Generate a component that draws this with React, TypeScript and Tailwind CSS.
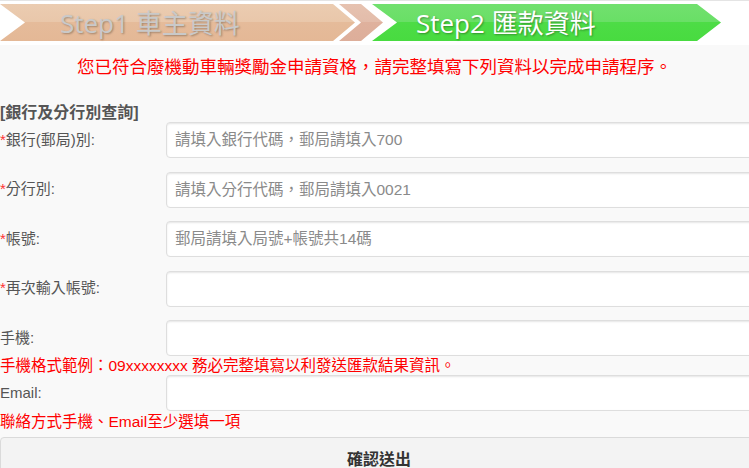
import React from 'react'

const font = { fontFamily: '"Liberation Sans", "Noto Sans CJK TC", sans-serif' }

function Banner() {
  return (
    <div className="relative h-[37px]">
      <svg className="absolute inset-0" width="749" height="37" viewBox="0 0 749 37">
        <defs>
          <linearGradient id="peach" x1="0" y1="0" x2="0" y2="1">
            <stop offset="0" stopColor="#ebccb1" />
            <stop offset="0.5" stopColor="#e9c7aa" />
            <stop offset="0.5" stopColor="#e5bb9a" />
            <stop offset="1" stopColor="#e4b896" />
          </linearGradient>
          <linearGradient id="pink" x1="0" y1="0" x2="0" y2="1">
            <stop offset="0" stopColor="#e6c2b0" />
            <stop offset="0.5" stopColor="#e3bcaa" />
            <stop offset="0.5" stopColor="#dfb19d" />
            <stop offset="1" stopColor="#ddae9a" />
          </linearGradient>
          <linearGradient id="green" x1="0" y1="0" x2="0" y2="1">
            <stop offset="0" stopColor="#71e06e" />
            <stop offset="0.5" stopColor="#69df66" />
            <stop offset="0.5" stopColor="#4ddc46" />
            <stop offset="1" stopColor="#48db40" />
          </linearGradient>
        </defs>
        <polygon points="0,0 333,0 355,18.5 333,37 0,37 25,18.5" fill="url(#peach)" />
        <polygon points="339,0 361,0 383,18.5 361,37 339,37 361,18.5" fill="url(#pink)" />
        <polygon points="372,0 697,0 721,18.5 697,37 372,37 397,18.5" fill="url(#green)" />
      </svg>
      <div
        className="relative flex items-center h-[37px] text-[26px] leading-none"
        style={{ fontFamily: '"Open Sans", "Noto Sans CJK TC", sans-serif' }}
      >
        <span className="w-[416px] pl-[60px] text-[#c9c9c9] [text-shadow:1px_1px_2px_rgba(0,0,0,0.3)]">
          Step1 車主資料
        </span>
        <span className="text-white [text-shadow:1px_1px_2px_rgba(0,0,0,0.35)]">Step2 匯款資料</span>
      </div>
    </div>
  )
}

interface FieldProps {
  label: string
  required?: boolean
  placeholder?: string
}

function Field({ label, required, placeholder }: FieldProps) {
  return (
    <div className="flex items-center h-[36px]">
      <label className="w-[166px] shrink-0 text-[15px] text-[#555]">
        {required && <span className="text-[#ff3333]">*</span>}
        {label}:
      </label>
      <input
        className="flex-1 h-[36px] rounded-[4px] border border-[#dedede] bg-white px-[8px] text-[15.5px] placeholder:text-[#8a8a8a] shadow-[inset_0_1px_2px_rgba(0,0,0,0.1)] outline-none"
        placeholder={placeholder}
        style={font}
      />
    </div>
  )
}

export default function App() {
  return (
    <div className="w-[749px] h-[468px] overflow-hidden bg-[#f9f9f9]" style={font}>
      <div className="border-t border-[#e4e4e4] bg-white pt-[3px] pb-[4px]">
        <Banner />
      </div>
      <p className="mt-[10px] h-[24px] leading-[24px] text-center text-[17.5px] text-[#ff0000]">
        您已符合廢機動車輛獎勵金申請資格，請完整填寫下列資料以完成申請程序。
      </p>
      <div className="w-[758px] mt-[21px]">
        <h3 className="h-[22px] leading-[26px] text-[16px] font-bold text-[#555]">[銀行及分行別查詢]</h3>
        <div className="flex flex-col gap-[13.5px]">
          <Field label="銀行(郵局)別" required placeholder="請填入銀行代碼，郵局請填入700" />
          <Field label="分行別" required placeholder="請填入分行代碼，郵局請填入0021" />
          <Field label="帳號" required placeholder="郵局請填入局號+帳號共14碼" />
          <Field label="再次輸入帳號" required />
          <Field label="手機" />
        </div>
        <p className="h-[19px] leading-[19px] text-[15.5px] text-[#ff0000]">
          手機格式範例：09xxxxxxxx 務必完整填寫以利發送匯款結果資訊。
        </p>
        <Field label="Email" />
        <p className="h-[20px] leading-[22px] text-[15.5px] text-[#ff0000]">聯絡方式手機、Email至少選填一項</p>
        <button className="mt-[6px] w-full h-[46px] rounded-[4px] border border-[#dadada] bg-[#f3f3f3] text-[16px] font-bold text-[#333]">
          確認送出
        </button>
      </div>
    </div>
  )
}
